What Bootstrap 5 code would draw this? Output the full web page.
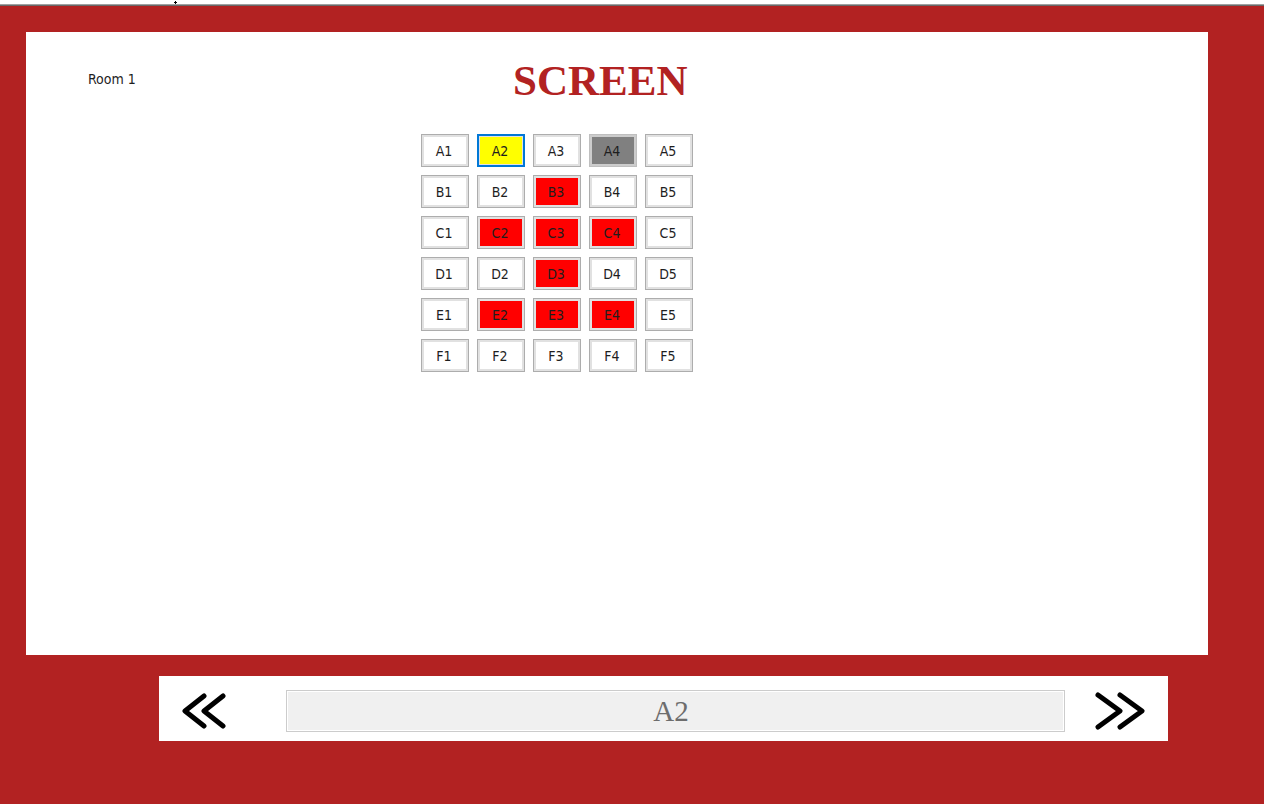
<!DOCTYPE html>
<html lang="en">
<head>
<meta charset="utf-8">
<meta name="viewport" content="width=device-width, initial-scale=1">
<title>Room 1</title>
<link href="https://cdn.jsdelivr.net/npm/bootstrap@5.3.0/dist/css/bootstrap.min.css" rel="stylesheet">
<style>
  body { background: #b22222; font-family: Tahoma, "DejaVu Sans Condensed", "DejaVu Sans", sans-serif; font-size: 14px; color: #1e1e1e; }
  .top-strip { height: 6px; background: #fff; border-bottom: 1px solid #696969; box-shadow: inset 0 -1px #a0a0a0; }
  .top-strip svg { margin-left: 174px; }
  .room-panel { min-height: 623px; margin: 26px 56px 0 26px; padding-top: 27px; }
  .room-side { width: 395px; padding: 9px 0 0 62px; line-height: 22px; }
  .screen-title { font: bold 43px/44px "Liberation Serif", serif; color: #b22222; margin: 0 0 31px 92px; }
  .seat-grid { display: grid; grid-template-columns: repeat(5, 48px); gap: 8px; }
  .seat { height: 33px; padding: 0 2px 0 0; border: 1px solid #adadad; border-radius: 0; background: #fff;
    box-shadow: inset 0 0 0 2px #e1e1e1; font-size: 14px; line-height: 20px; color: #1e1e1e; }
  .seat.taken { background: #f00; }
  .seat.chosen { background: #ff0; border: 2px solid #0078d7; box-shadow: inset 0 0 0 1px #e1e1e1; }
  .seat.blocked { background: #808080; border-color: #bfbfbf; box-shadow: inset 0 0 0 2px #ccc; }
  .step-bar { height: 65px; margin: 21px 96px 0 159px; padding-top: 14px; }
  .step-btn { border: 0; border-radius: 0; background: #fff; padding: 0; height: 42px; text-align: left; }
  .step-back { width: 127px; padding-left: 22px; }
  .step-next { width: 103px; padding-left: 29px; }
  .picked, .picked:disabled { height: 42px; padding: 0 9px 0 0; border: 1px solid #ccc; border-radius: 0; background: #f0f0f0;
    box-shadow: inset 0 0 0 1px #fff; text-align: center; font: 29px/38px "Liberation Serif", serif; color: #6d6d6d; }
  .chevrons { display: block; fill: none; stroke: #000; stroke-width: 5; stroke-linecap: round; stroke-linejoin: round; }
</style>
</head>
<body class="min-vh-100">
<div class="top-strip"><svg class="d-block" width="3" height="4" aria-hidden="true"><path d="M1 1h1v3h-1zM0 2h3v1H0z"/></svg></div>
<main class="room-panel bg-white d-flex">
  <div class="room-side flex-shrink-0">Room 1</div>
  <section>
    <h1 class="screen-title">SCREEN</h1>
    <div class="seat-grid">
      <button type="button" class="seat">A1</button>
      <button type="button" class="seat chosen">A2</button>
      <button type="button" class="seat">A3</button>
      <button type="button" class="seat blocked" disabled>A4</button>
      <button type="button" class="seat">A5</button>
      <button type="button" class="seat">B1</button>
      <button type="button" class="seat">B2</button>
      <button type="button" class="seat taken">B3</button>
      <button type="button" class="seat">B4</button>
      <button type="button" class="seat">B5</button>
      <button type="button" class="seat">C1</button>
      <button type="button" class="seat taken">C2</button>
      <button type="button" class="seat taken">C3</button>
      <button type="button" class="seat taken">C4</button>
      <button type="button" class="seat">C5</button>
      <button type="button" class="seat">D1</button>
      <button type="button" class="seat">D2</button>
      <button type="button" class="seat taken">D3</button>
      <button type="button" class="seat">D4</button>
      <button type="button" class="seat">D5</button>
      <button type="button" class="seat">E1</button>
      <button type="button" class="seat taken">E2</button>
      <button type="button" class="seat taken">E3</button>
      <button type="button" class="seat taken">E4</button>
      <button type="button" class="seat">E5</button>
      <button type="button" class="seat">F1</button>
      <button type="button" class="seat">F2</button>
      <button type="button" class="seat">F3</button>
      <button type="button" class="seat">F4</button>
      <button type="button" class="seat">F5</button>
    </div>
  </section>
</main>
<footer class="step-bar bg-white d-flex align-items-start">
  <button type="button" class="step-btn step-back flex-shrink-0" aria-label="Previous">
    <svg class="chevrons" width="46" height="37" viewBox="0 0 46 37"><path d="M23 3 4 18l19 15M42 3 23 18l19 15"/></svg>
  </button>
  <input type="text" class="form-control picked" value="A2" aria-label="Selected seat" disabled>
  <button type="button" class="step-btn step-next flex-shrink-0" aria-label="Next">
    <svg class="chevrons" width="52" height="38" viewBox="0 0 52 38"><path d="M4 3 26 19 4 35M26 3 48 19 26 35"/></svg>
  </button>
</footer>
<script src="https://cdn.jsdelivr.net/npm/bootstrap@5.3.0/dist/js/bootstrap.bundle.min.js"></script>
</body>
</html>
